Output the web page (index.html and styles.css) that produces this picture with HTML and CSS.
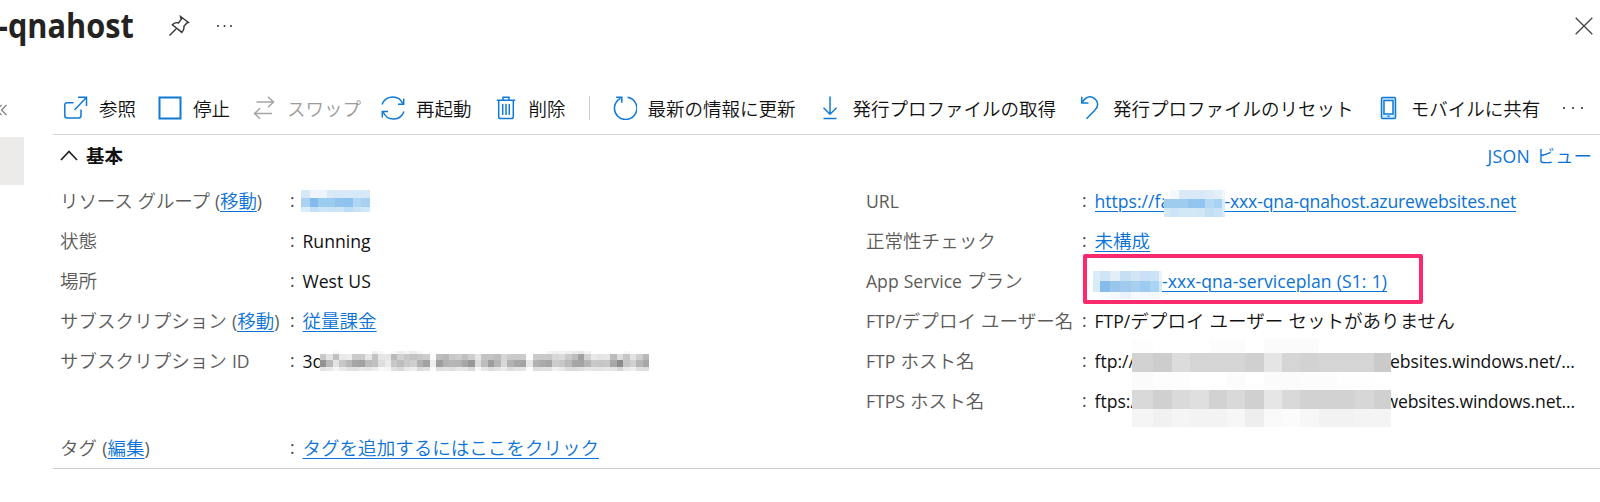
FILE: index.html
```html
<!DOCTYPE html>
<html lang="ja">
<head>
<meta charset="utf-8">
<title>qnahost</title>
<link rel="stylesheet" href="styles.css">
</head>
<body>
<div class="page">
  <header class="title-bar">
    <h1 class="title">-qnahost</h1>
    <svg class="pin" width="22" height="22" viewBox="0 0 22 22"><path d="M1.5 20.500L8 14M12.500 1.500L20.500 7.500L18.700 8.200L15.800 11.300C16.600 13.400 15.800 15 13.900 17.400L4.300 9.700C6.500 7.700 8.700 7.200 10.500 8L13.200 4.300Z"/></svg>
    <svg class="dots" width="18" height="4" viewBox="0 0 18 4"><circle cx="2" cy="2" r="1"/><circle cx="8.500" cy="2" r="1"/><circle cx="15" cy="2" r="1"/></svg>
    <svg class="close" width="18" height="18" viewBox="0 0 18 18"><path d="M.7 .7L17.300 17.300M17.300 .7L.7 17.300"/></svg>
  </header>
  <div class="body">
    <aside class="rail">
      <svg class="collapse" width="8" height="12" viewBox="0 0 8 12"><path d="M1.500 1L-3.500 6L1.500 11M6.500 1L1.500 6L6.500 11"/></svg>
      <div class="rail-item"></div>
    </aside>
    <main class="content">
      <nav class="toolbar">
        <div class="cmd"><svg class="icon" viewBox="0 0 24 24"><path d="M9.500 6.700H3Q.8 6.700 .8 9V19.500Q.8 22 3.200 22H14.500Q17 22 17 19.500V13.500M10.500 14L22.300 1.500M14 1.200H22.500V10"/></svg>参照</div>
        <div class="cmd"><svg class="icon stop" viewBox="0 0 24 24"><rect x="1.500" y="1.500" width="21" height="21"/></svg>停止</div>
        <div class="cmd off"><svg class="icon" viewBox="0 0 24 24"><path d="M4.500 6H21.500M16 .8L21.500 6L16 11.200M20 17.500H2.500M8 12.300L2.500 17.500L8 22.700"/></svg>スワップ</div>
        <div class="cmd restart"><svg class="icon" viewBox="0 0 24 24"><path d="M1 8.500C4.500-1 17.500-2 22 7.800M22.700 2.500V8.300H17M23 15.500C19.500 25 6.500 26 2 15.700M1.300 21.500V15.500H7"/></svg>再起動</div>
        <div class="cmd"><svg class="icon" viewBox="0 0 24 24"><path d="M2.800 4.200H21.200M9 4V1.200H15V4M4.700 4.500V20.500Q4.700 22.600 6.500 22.600H17.500Q19.300 22.600 19.300 20.500V4.500M8.700 8V19M12 8V19M15.300 8V19"/></svg>削除</div>
        <div class="sep"></div>
        <div class="cmd"><svg class="icon" viewBox="0 0 24 24"><path d="M14.500 1.200A11.200 11.200 0 1 1 7.500 2.300M3.200 1.200H8.800V6.800"/></svg>最新の情報に更新</div>
        <div class="cmd"><svg class="icon" viewBox="0 0 24 24"><path d="M12 .5V18M5.500 11.800L12 18.300L18.500 11.800M5.500 22.600H18.500"/></svg>発行プロファイルの取得</div>
        <div class="cmd"><svg class="icon" viewBox="0 0 24 24"><path d="M3.800 .8V7H10.500M4 6.800C7 2 11-.5 15 1.700C21 5 20.500 10.500 17 14L8.500 22.700"/></svg>発行プロファイルのリセット</div>
        <div class="cmd"><svg class="icon" viewBox="0 0 24 24"><rect x="5.500" y="1.500" width="14" height="21" rx="1" fill="#d3e9fb"/><rect x="8" y="4.500" width="9" height="13.500" fill="#fff"/><path d="M11.500 20.300H13.500"/></svg>モバイルに共有</div>
        <svg class="dots more" width="24" height="4" viewBox="0 0 24 4"><circle cx="2" cy="2" r="1.100"/><circle cx="11" cy="2" r="1.100"/><circle cx="20" cy="2" r="1.100"/></svg>
      </nav>
      <section class="essentials">
        <div class="section-head">
          <svg class="chevron" width="18" height="11" viewBox="0 0 18 11"><path d="M1 10L9 1.500L17 10"/></svg>
          <h2>基本</h2>
          <a class="json"><span class="en">JSON </span>ビュー</a>
        </div>
        <div class="columns">
          <dl class="props left">
            <dt class="group-label">リソース グループ <span class="en">(</span><a>移動</a><span class="en">)</span></dt><dd><svg class="mosaic group-name" width="77" height="27"></svg></dd>
            <dt>状態</dt><dd><span class="en">Running</span></dd>
            <dt>場所</dt><dd><span class="en">West US</span></dd>
            <dt>サブスクリプション <span class="en">(</span><a>移動</a><span class="en">)</span></dt><dd><a>従量課金</a></dd>
            <dt>サブスクリプション <span class="en">ID</span></dt><dd><span class="en clip-id">3d</span><svg class="mosaic sub-id" width="332" height="20"></svg></dd>
          </dl>
          <dl class="props right">
            <dt><span class="en">URL</span></dt><dd><a class="en"><span class="clip-url">https://fa</span><svg class="mosaic url-name" width="61" height="27"></svg><span class="tail-url">-xxx-qna-qnahost.azurewebsites.net</span></a></dd>
            <dt>正常性チェック</dt><dd><a>未構成</a></dd>
            <dt><span class="en">App Service </span>プラン</dt><dd><a class="en"><svg class="mosaic plan-name" width="69" height="28"></svg><span class="tail-plan">-xxx-qna-serviceplan (S1: 1)</span></a><span class="highlight"></span></dd>
            <dt><span class="en">FTP/</span>デプロイ ユーザー名</dt><dd><div><span class="en">FTP/</span>デプロイ ユーザー セットがありません</div></dd>
            <dt><span class="en">FTP </span>ホスト名</dt><dd><span class="en clip-ftp">ftp://</span><span class="en tail-ftp">ebsites.windows.net/...</span><svg class="mosaic ftp-hosts" width="259" height="88"></svg></dd>
            <dt><span class="en">FTPS </span>ホスト名</dt><dd class="ftps"><span class="en clip-ftp">ftps:/</span><span class="en tail-ftp">websites.windows.net...</span></dd>
          </dl>
        </div>
        <dl class="props tags">
          <dt>タグ <span class="en">(</span><a>編集</a><span class="en">)</span></dt><dd><a>タグを追加するにはここをクリック</a></dd>
        </dl>
      </section>
    </main>
  </div>
</div>
<script src="mosaic.js"></script>
</body>
</html>
```

FILE: styles.css
```css
* { box-sizing: border-box; }
body { margin: 0; background: #fff; }
.page {
  width: 1600px; height: 502px; overflow: hidden;
  font-family: "Noto Sans CJK JP", sans-serif;
  font-weight: 350; font-size: 18.55px; line-height: 40px; color: #111; white-space: nowrap; word-spacing: 1px;
}
.en { font-family: "Open Sans", "Noto Sans", sans-serif; font-size: 17.6px; white-space: pre; font-weight: 400; word-spacing: .5px; }
svg { display: block; flex: none; fill: none; }
.title-bar { display: flex; align-items: center; height: 52px; padding: 0 7px 0 0; }
.title {
  margin: -2px 0 0 -2px; width: 170px; font: 700 34.5px/50px "Open Sans", "Noto Sans", sans-serif;
  color: #242322; transform: scaleX(.89); transform-origin: 0 50%;
}
.pin { stroke: #333; stroke-width: 1.4; }
.dots { fill: #333; margin-left: 26px; }
.close { stroke: #444; stroke-width: 1.3; margin-left: auto; }
.body { display: flex; }
.rail { width: 53px; flex: none; }
.collapse { margin: 51.500px 0 21.500px; stroke: #777; stroke-width: 1.1; }
.rail-item { width: 24px; height: 48px; background: #ecebea; }
.content { flex: 1; min-width: 0; }
.toolbar { display: flex; align-items: center; height: 83px; padding: 29px 0 0 11px; gap: 22px; border-bottom: 1px solid #d4d4d4; }
.cmd { display: flex; align-items: center; gap: 11px; line-height: 30px; flex: none; font-size: 18.5px; }
.icon { width: 24px; height: 24px; stroke: #0f7ad6; stroke-width: 1.5; }
.stop { stroke-width: 2; }
.off { color: #9c9b9a; }
.off .icon { stroke: #a5a4a3; }
.restart { margin-left: -2px; }
.sep { width: 1px; height: 24px; background: #ccc; margin: 0 1px; flex: none; }
.more { margin-left: 0; }
.section-head { display: flex; align-items: center; height: 46px; padding: 0 8px 6px 7px; }
.chevron { stroke: #222; stroke-width: 1.7; }
h2 { margin: 0 0 0 8px; font-size: 18.5px; font-weight: 700; }
.json { margin-left: auto; }
.json .en { letter-spacing: .3px; word-spacing: 1.5px; }
a { color: #0b72d6; }
.props a { text-decoration: underline; text-decoration-thickness: 1px; text-underline-offset: 3px; }
.columns { display: flex; margin-top: -1px; }
.left { width: 806px; flex: none; }
.right { width: 741px; flex: none; }
.props { display: grid; grid-template-columns: 230px 1fr; grid-auto-rows: 40px; margin: 0; padding-left: 7px; }
.right { grid-template-columns: 216px 1fr; }
dt { color: #5c5b5a; }
.group-label { letter-spacing: -.15px; }
dd { margin: 0; display: flex; align-items: center; position: relative; }
dd > .en { padding-top: 2px; }
dd > a.en { display: flex; align-items: center; text-decoration: none; }
dd > a.en span { text-decoration: underline; text-decoration-thickness: 1px; text-underline-offset: 3px; }
dd::before { content: ":"; width: 12.5px; color: #444; font: 17.6px/40px "Open Sans", sans-serif; flex: none; }
.tags { margin-top: 7px; height: 42px; border-bottom: 1px solid #ccc; }
.group-name { margin: 3px 0 0 -1.5px; }
.clip-id { width: 17px; overflow: hidden; }
.sub-id { margin-top: 2px; }
.clip-url { width: 69px; overflow: hidden; }
.url-name { margin-top: 4px; }
.tail-url { letter-spacing: -.16px; }
.plan-name { margin: 7px 0 0 -1.5px; }
.tail-plan { letter-spacing: .05px; }
.clip-ftp { width: 38px; overflow: hidden; }
.tail-ftp { margin-left: 257.5px; letter-spacing: -.08px; }
.ftps .tail-ftp { margin-left: 252px; letter-spacing: -.15px; }
.ftp-hosts { position: absolute; left: 50px; top: -1px; z-index: 1; }
.highlight { position: absolute; left: 1px; top: -6px; width: 340px; height: 50px; border: 4px solid #fb2a6d; border-radius: 2px; }
```

FILE: mosaic.js
```js
// Pixelated redaction blocks: column edges, row edges, and one colour list per row.
function mosaic(selector, cols, rows, colours) {
  const svg = document.querySelector(selector);
  svg.setAttribute("shape-rendering", "crispEdges");
  colours.forEach((line, r) => line.split(" ").forEach((c, i) => {
    const rect = document.createElementNS("http://www.w3.org/2000/svg", "rect");
    rect.setAttribute("x", cols[i]);
    rect.setAttribute("y", rows[r]);
    rect.setAttribute("width", cols[i + 1] - cols[i]);
    rect.setAttribute("height", rows[r + 1] - rows[r]);
    rect.setAttribute("fill", "#" + c);
    svg.appendChild(rect);
  }));
}
const even = (n, step) => Array.from({ length: n + 1 }, (_, i) => i * step);
const grey = line => line.split(" ").map(c => c + c + c).join(" ");

mosaic(".group-name", even(9, 8.6), [2, 10, 19, 24], [
  "d4e8f8 f0f5fd eef4fd d8eaf8 d8e8f8 d8eaf8 d5e8f8 d5e9f8 ffffff",
  "acd2f3 83bbec 9ccbf0 9ccbf0 92c2ee 8fc2ee b1d6f4 a6d0f2 fafcff",
  "d8ecfa c4e0f6 cce3f8 c8e2f7 cee5f8 bddcf5 c9e2f7 d0e7f9 ffffff"]);
mosaic(".sub-id", even(51, 6.45), [0, 3, 9, 16, 20], [
  grey("ff ff f7 ff ff ff ff ff f0 f8 ff f9 ee f4 ee f8 ff ff ff ff ff ff ff ff ff ff ff ff ff ff ff ff ff ff ff f4 f0 f4 f0 ec e8 f4 ff ff ff ff ff f7 ff ff ff"),
  grey("c8 e3 c0 e8 ec cb cb e6 c2 e5 e5 b9 d0 c8 c3 c8 cc fb bd b8 c8 cc c0 ce e6 c4 c3 bd d6 ca c9 cb ff cb c9 c8 d7 db ca bc a1 d2 e9 e4 e6 bb dc c5 e2 ce b9"),
  grey("92 b9 e3 c7 b8 a5 a1 bc c0 de eb c7 bd c9 cf b1 a2 ee 9e b3 b6 b3 a7 98 dc bd 9e b5 d7 b2 a7 a4 e7 b1 ab a5 cc c7 ba a6 a4 b5 c8 c6 c7 a8 8c c6 d1 b5 a7"),
  grey("e2 e8 f5 ea e1 e1 e9 e5 ed f8 f6 e0 d9 e9 ee dc e2 fd e0 e3 e0 e7 e6 dc f8 e7 dc e4 eb dd e5 e5 fb de e2 e1 f0 e8 dc dc e1 e8 e5 e4 e8 e5 d8 ea ef df dd")]);
mosaic(".url-name", [0, 6, 15, 24, 33, 41, 50, 58, 61], [0, 9, 18, 27], [
  "ffffff f3f9fd d9e9f7 d9e9f7 d9e9f7 dcebf7 e3f0fa eff7fc",
  "9dccef 9dccef 9ecbee 91c5ee 8fc5ef b5d9f4 a8d2f2 d8ebf9",
  "d2e8f7 cce4f7 d2e8f7 d2e8f7 d0e7f7 c2dff4 c9e3f6 d7eaf8"]);
mosaic(".plan-name", [0, 7, 17, 27, 38, 47, 57, 66, 69], [0, 10, 21, 28], [
  "d8edf9 cfe5f5 e2eff8 c6e0f3 d1e5f7 c9dff5 cce2f6 eaf4fb",
  "d7eaf8 87bbe9 98c6ec a0cbee a7cff0 9ccaf0 aad4f3 d6e9f7",
  "ffffff fafcff f6f9fd eaf3fb f6f9fd f4f9fd f5f9fd fafcff"]);
mosaic(".ftp-hosts", [0, 21, 40, 58, 77, 95, 113, 132, 150, 168, 187, 205, 223, 242, 259], [0, 14, 33, 51, 70, 88], [
  grey("fd ff ff ff fc fc ff fb fb fb ff ff ff ff"),
  grey("d2 cd dc d5 d5 d5 d0 e5 d5 d2 d5 d5 d5 ca"),
  grey("fb fd fd ff ff fc ff fb fb fc fc fe fe ff"),
  grey("d9 d0 da de d2 d9 d0 e6 d9 d2 d2 d2 d7 d0"),
  grey("f5 f1 f5 f3 f3 f7 ee f9 fb f7 f2 f2 f4 f4")]);
```
